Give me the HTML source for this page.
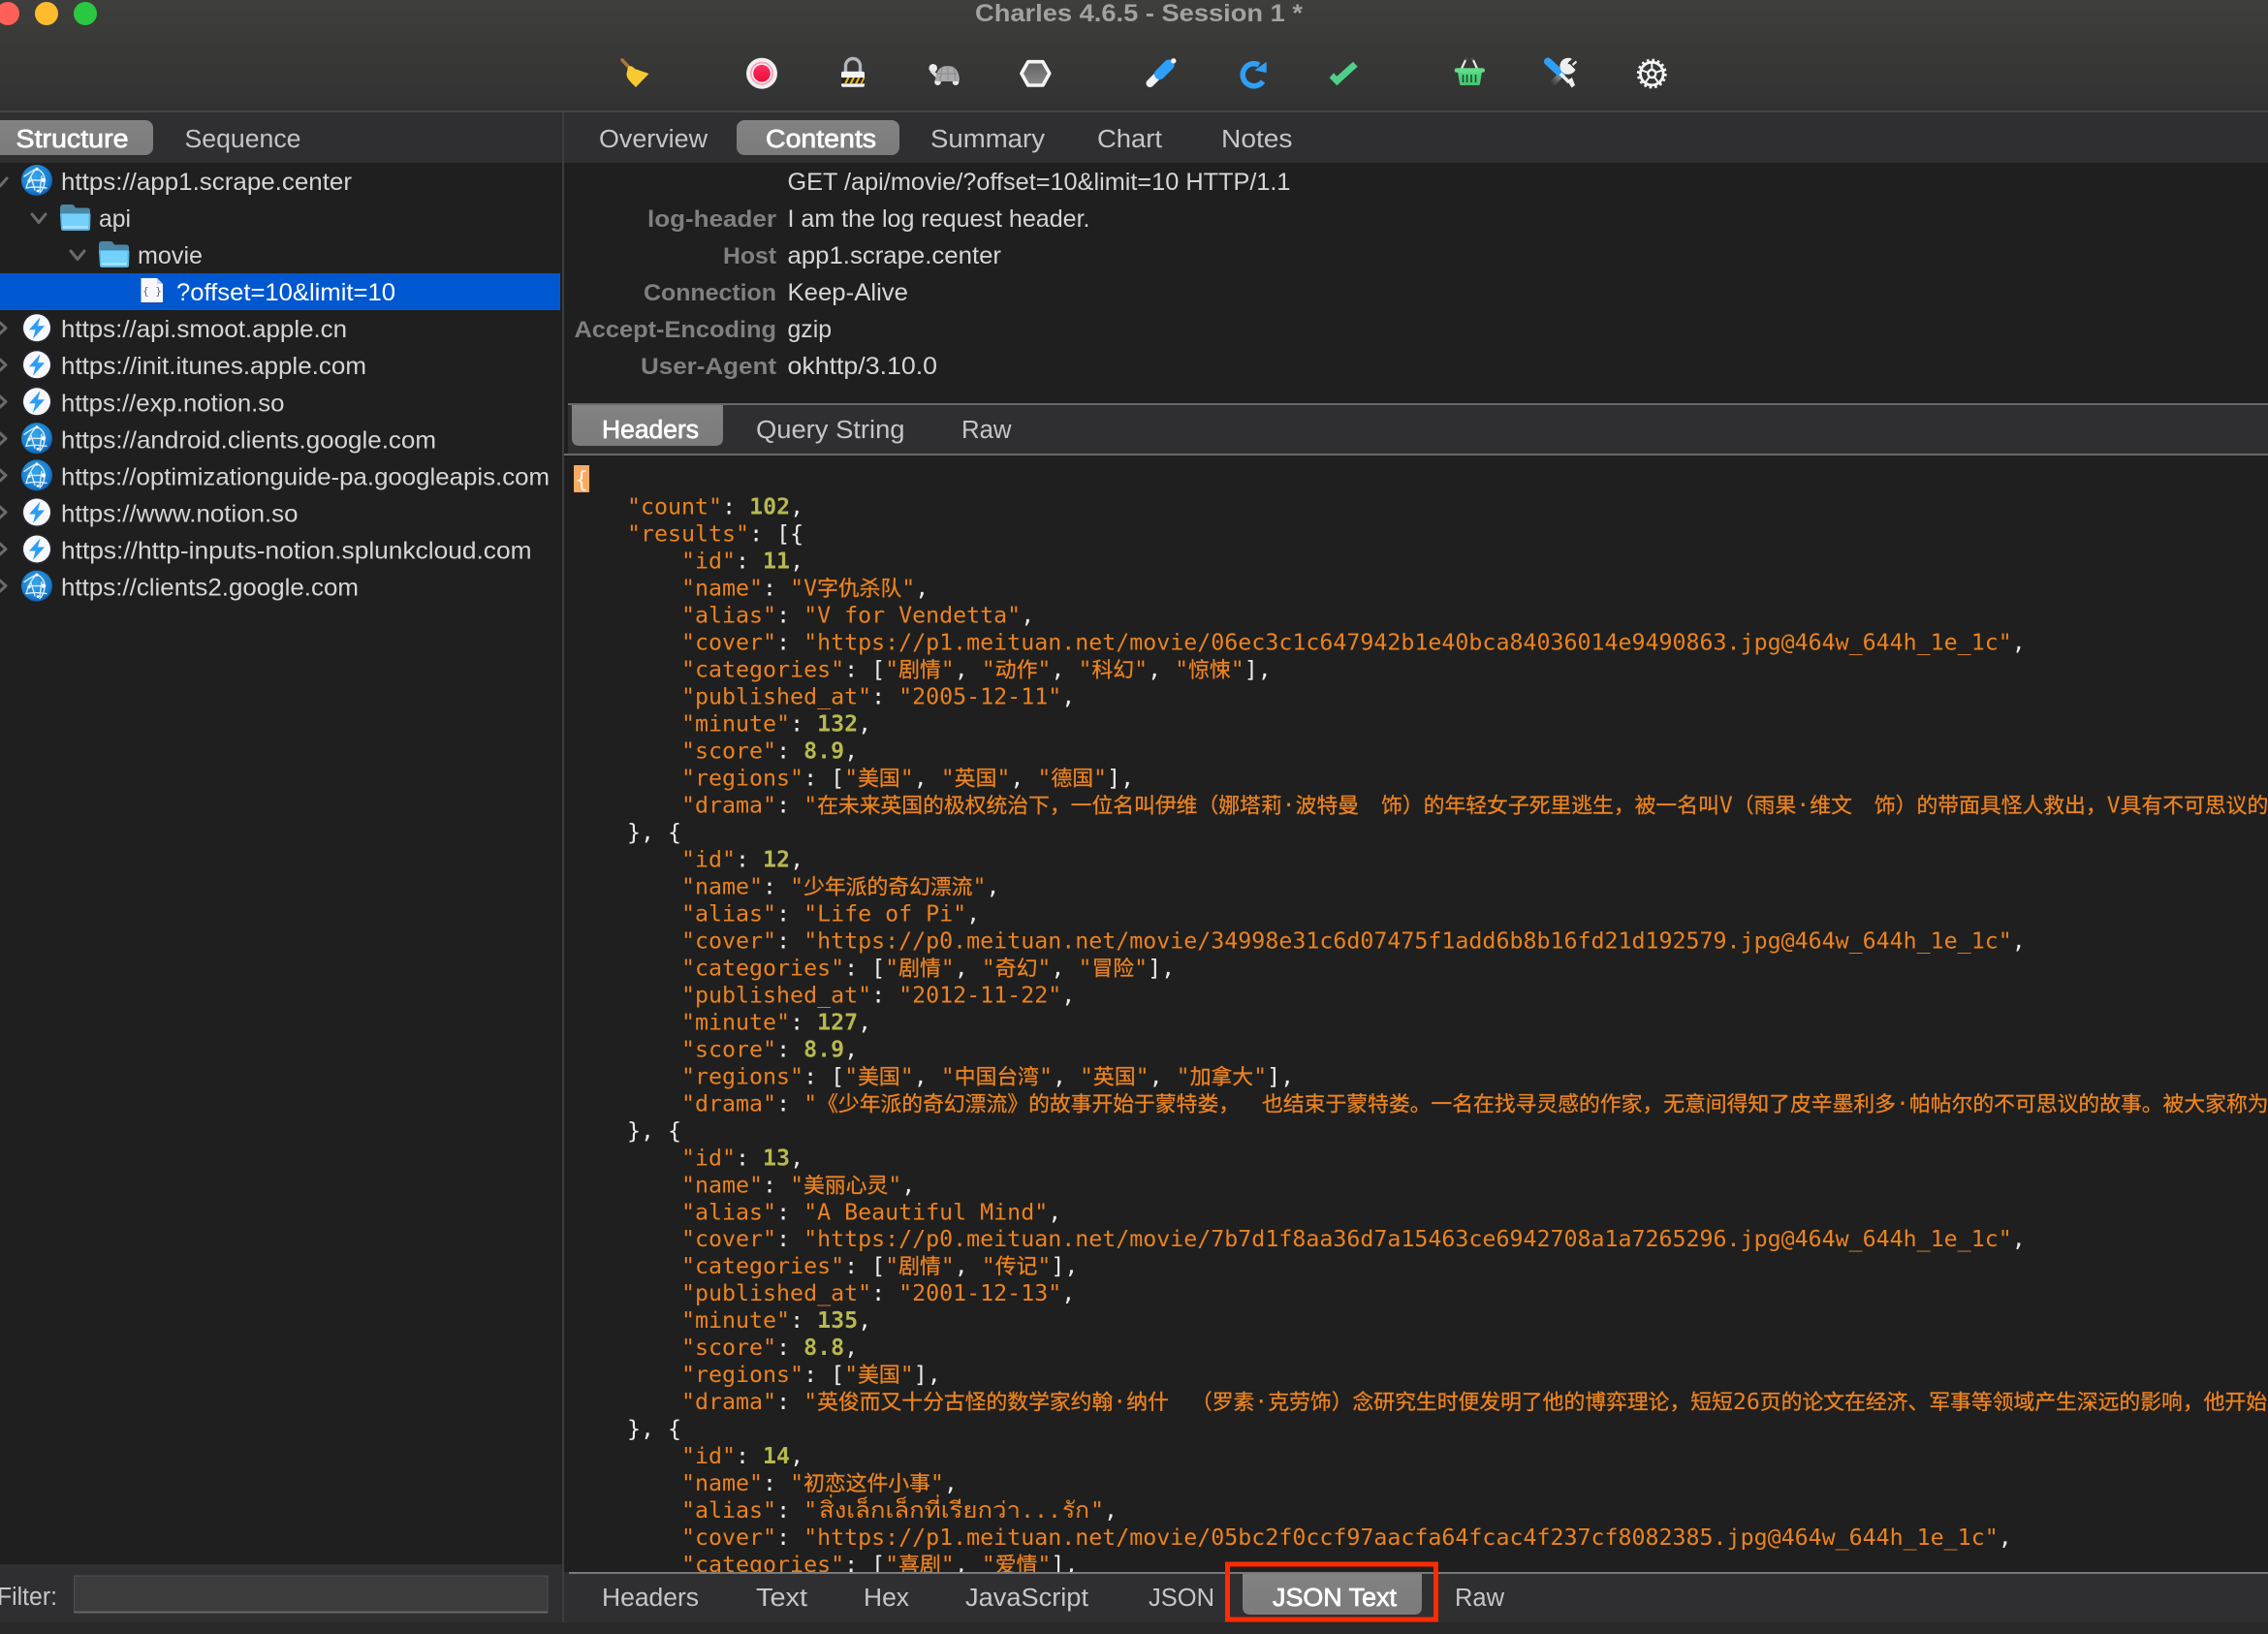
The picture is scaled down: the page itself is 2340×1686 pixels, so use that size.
<!DOCTYPE html>
<html><head><meta charset="utf-8"><title>Charles 4.6.5 - Session 1 *</title>
<style>
html,body{margin:0;padding:0;background:#1f1f1f;width:2340px;height:1686px;overflow:hidden}
svg{display:block;position:absolute;left:0;top:0}
text{white-space:pre}
.u{font-family:"Liberation Sans",sans-serif;font-size:25px;fill:#d6d6d6}
.t{font-family:"Liberation Sans",sans-serif;font-size:25.5px;fill:#c6c6c6}
.s{font-family:"Liberation Sans",sans-serif;font-size:25.5px;fill:#fff;stroke:#fff;stroke-width:.7px}
.l{font-family:"Liberation Sans",sans-serif;font-size:24.5px;fill:#808080;font-weight:bold;text-anchor:start}
.j{font-family:"DejaVu Sans Mono",monospace;font-size:23.27px;fill:#ea8220}
.w{fill:#ececec}
.n{fill:#b7b950;font-weight:bold}
.c{font-family:"Noto Sans CJK SC",sans-serif;font-size:21.8px;stroke:#ea8220;stroke-width:.3px}
.p{font-size:19.1px}
.chev{fill:none;stroke:#6b6b6b;stroke-width:3;stroke-linecap:round;stroke-linejoin:round}
</style></head><body>
<svg width="2340" height="1686" viewBox="0 0 2340 1686" xmlns="http://www.w3.org/2000/svg">
<defs>
<linearGradient id="tb" x1="0" y1="0" x2="0" y2="1"><stop offset="0" stop-color="#3e3e3c"/><stop offset="1" stop-color="#323232"/></linearGradient>
<linearGradient id="sel" x1="0" y1="0" x2="0" y2="1"><stop offset="0" stop-color="#828282"/><stop offset="1" stop-color="#7b7b7b"/></linearGradient>
<radialGradient id="gl" cx=".45" cy=".4" r=".65"><stop offset="0" stop-color="#38a6e8"/><stop offset=".7" stop-color="#1a7fd0"/><stop offset="1" stop-color="#0b55a8"/></radialGradient>
<linearGradient id="hx" x1="0" y1="0" x2="0" y2="1"><stop offset="0" stop-color="#606060"/><stop offset="1" stop-color="#8a8a8a"/></linearGradient>
<linearGradient id="rd" x1="0" y1="0" x2="0" y2="1"><stop offset="0" stop-color="#ff2d5c"/><stop offset="1" stop-color="#e8103a"/></linearGradient>
<linearGradient id="wr" x1="1" y1="0" x2="0" y2="1"><stop offset="0" stop-color="#e8e8e8"/><stop offset=".5" stop-color="#8a8a8a"/><stop offset="1" stop-color="#333"/></linearGradient>
<linearGradient id="bk" x1="0" y1="0" x2="0" y2="1"><stop offset="0" stop-color="#4fd882"/><stop offset="1" stop-color="#48c470"/></linearGradient>
<g id="globe">
<circle cx="16" cy="16" r="16" fill="url(#gl)"/>
<g fill="none" stroke="#d8ecfa" stroke-width="1.400" stroke-linecap="round">
<path d="M5 24 Q9 10 16 4"/><path d="M16 4 Q24 8 24 16 Q24 24 19 29"/><path d="M8 16 H24"/><path d="M5 24 Q14 22 26 24"/><path d="M10 13 L14 26"/><path d="M21 12 L19 27"/><path d="M3 12 Q10 7 16 4"/>
</g>
<circle cx="16" cy="4.500" r="1.600" fill="#fff"/><circle cx="23" cy="16" r="2.200" fill="#fff"/><circle cx="8" cy="17" r="1.600" fill="#fff"/><circle cx="17" cy="27" r="1.400" fill="#fff"/>
</g>
<g id="bolt">
<circle cx="14.500" cy="14.500" r="16" fill="#24242b"/>
<circle cx="14.500" cy="14.500" r="14" fill="#f6f8fb"/>
<path d="M18 3.500 L6.500 16.500 H13 L10.500 26 L22.500 12.500 H15.500 Z" fill="#2b9df5"/>
</g>
<g id="folder">
<path d="M0 5 Q0 1 3 1 H12 Q14 1 15 3 L16 4.500 H28 Q31 4.500 31 7.500 V14 H0 Z" fill="#4b87a4"/>
<path d="M1 10 H30 Q31.500 10 31.500 12 L31 26 Q31 28 28.500 28 H3.500 Q1 28 1 26 L0 12 Q0 10 1 10 Z" fill="#5ab4de"/>
<rect x="2" y="11" width="27.500" height="12" fill="#74d1fb"/>
<rect x="2.500" y="23" width="26.500" height="3" fill="#a0e0fc"/>
</g>
</defs>

<!-- toolbar -->
<rect x="0" y="0" width="2340" height="114" fill="url(#tb)"/>
<rect x="0" y="114" width="2340" height="2" fill="#454545"/>
<circle cx="8" cy="14" r="12" fill="#fe5f57"/>
<circle cx="48" cy="14" r="12" fill="#febb2e"/>
<circle cx="88" cy="14" r="12" fill="#2ac840"/>
<text x="1006" y="22" font-family="Liberation Sans" font-weight="bold" font-size="25" fill="#a2a2a0" textLength="338" lengthAdjust="spacingAndGlyphs">Charles 4.6.5 - Session 1 *</text>

<!-- broom -->
<path d="M642 62 L650 70.500" stroke="#a87838" stroke-width="3.500" stroke-linecap="round"/>
<path d="M648 68.700 Q652 67 655 71 L669.500 76 L656 90 L651 85 Q646 80 646.500 76 Z" fill="#f8c930"/>
<!-- record -->
<circle cx="786" cy="75.700" r="16" fill="#f0eef0"/>
<circle cx="786" cy="75.700" r="12" fill="#f59ab2"/>
<circle cx="786" cy="75.700" r="10.500" fill="#fbe8ee"/>
<circle cx="786" cy="75.700" r="8.800" fill="url(#rd)"/>
<!-- lock -->
<path d="M872.500 75 V68 A7.500 7.500 0 0 1 887.500 68 V75" fill="none" stroke="#b4b4c0" stroke-width="3.400"/>
<rect x="868" y="73.700" width="24" height="16" rx="2" fill="#f4f4f6"/>
<rect x="868" y="80" width="24" height="6.300" fill="#26261f"/>
<path d="M871 86.300 L874 80 H876.500 L873.500 86.300 Z M876.500 86.300 L879.500 80 H882 L879 86.300 Z M882 86.300 L885 80 H887.500 L884.500 86.300 Z M887.500 86.300 L890.500 80 H892 V81 L889.500 86.300 Z" fill="#e5b52a"/>
<!-- turtle -->
<circle cx="962.700" cy="70.300" r="4.300" fill="#ececec"/>
<path d="M961 73 L968 80" stroke="#ddd" stroke-width="3.500"/>
<circle cx="967.500" cy="84.700" r="3.300" fill="#e8e8e8"/>
<circle cx="986" cy="84.700" r="3.300" fill="#e8e8e8"/>
<path d="M965 82.500 Q966 68 978 68 Q989 68 990 82.500 Q990 84 986 84 H969 Q965 84 965 82.500 Z" fill="#a9a9ab"/>
<path d="M972 69.500 L970 83 M978 68 V83 M984 69.500 L986 83 M967 76 H988" stroke="#8a8a8c" stroke-width="1" fill="none"/>
<!-- hexagon -->
<path d="M1060.700 63.700 H1076 L1082.800 75.800 L1076 88 H1060.700 L1053.900 75.800 Z" fill="url(#hx)" stroke="#f4f4f4" stroke-width="3.600" stroke-linejoin="round"/>
<!-- pen -->
<path d="M1186.500 86 L1196 76.500" stroke="#f2f2f2" stroke-width="8" stroke-linecap="round"/>
<path d="M1196.500 76.500 L1206 67" stroke="#2f9ff8" stroke-width="11" stroke-linecap="round"/>
<circle cx="1210.800" cy="62.800" r="2.700" fill="#f2f2f2"/>
<!-- refresh -->
<path d="M1303 84 A11.500 11.500 0 1 1 1299 67" fill="none" stroke="#2f9ff5" stroke-width="5.500"/>
<path d="M1306.700 63.700 V75 L1294.500 72.500 Z" fill="#2f9ff5"/>
<!-- check -->
<path d="M1371.700 80.300 L1379.300 88.200 L1400.700 68.700 L1396 63.700 L1379.300 78.700 L1376 75.300 Z" fill="#4ed088"/>
<!-- basket -->
<path d="M1507 73 L1512 62" stroke="#e8e8e8" stroke-width="2.200"/><path d="M1525 73 L1520 62" stroke="#e8e8e8" stroke-width="2.200"/>
<path d="M1512 62 L1514 60 M1520 62 L1518 60" stroke="#555" stroke-width="2.500"/>
<path d="M1504 74 H1529 L1527 86.500 Q1527 88 1525 88 H1508 Q1506 88 1506 86.500 Z" fill="url(#bk)"/>
<rect x="1500.700" y="70.300" width="31.300" height="4.500" rx="2.200" fill="#62dc8a"/>
<path d="M1509.500 77 V85 M1513.600 77 V85 M1518 77 V85 M1522.500 77 V85" stroke="#22482f" stroke-width="1.600"/>
<!-- tools -->
<path d="M1618.500 69 L1601 87" stroke="url(#wr)" stroke-width="6" stroke-linecap="round"/>
<path d="M1597 63.500 L1610.500 76" stroke="#2f9ff5" stroke-width="8" stroke-linecap="round"/>
<path d="M1610 76 L1619 85" stroke="#eeeeee" stroke-width="3.500"/>
<path d="M1617 83 L1622 80 L1625 88 L1621.500 90.500 Z" fill="#eee"/>
<path d="M1622 60.800 A8.500 8.500 0 1 0 1625.500 72 L1621 67.500 L1618.500 68 L1617.500 66 L1618 64.500 Z M1626 62.500 L1622 66 L1623 68 L1627 64.500 Z" fill="#eeeeee"/>
<!-- gear -->
<g fill="none" stroke="#f4f6f8">
<circle cx="1704.300" cy="76" r="11.800" stroke-width="2.800"/>
<circle cx="1704.300" cy="76" r="14" stroke-width="2.800" stroke-dasharray="2.600 2.900"/>
<circle cx="1704.300" cy="76" r="4" stroke-width="2.400"/>
<path d="M1704.300 72 V65 M1708.100 74.800 L1714.800 72.600 M1706.700 79.200 L1710.900 85 M1701.900 79.200 L1697.700 85 M1700.500 74.800 L1693.800 72.600" stroke-width="2"/>
</g>

<!-- tab bar -->
<rect x="0" y="116" width="2340" height="52" fill="#2f2f31"/>
<rect x="-10" y="124" width="168" height="36" rx="8" fill="url(#sel)"/>
<text class="s" x="16.500" y="152" textLength="116" lengthAdjust="spacingAndGlyphs">Structure</text>
<text class="t" x="190.500" y="152" textLength="120" lengthAdjust="spacingAndGlyphs">Sequence</text>
<text class="t" x="618" y="152" textLength="112" lengthAdjust="spacingAndGlyphs">Overview</text>
<rect x="760" y="124" width="168" height="36" rx="8" fill="url(#sel)"/>
<text class="s" x="790" y="152" textLength="114" lengthAdjust="spacingAndGlyphs">Contents</text>
<text class="t" x="960" y="152" textLength="118" lengthAdjust="spacingAndGlyphs">Summary</text>
<text class="t" x="1132" y="152" textLength="67" lengthAdjust="spacingAndGlyphs">Chart</text>
<text class="t" x="1260" y="152" textLength="73.500" lengthAdjust="spacingAndGlyphs">Notes</text>

<!-- tree -->
<rect x="0" y="282" width="578" height="38" fill="#0058d1"/>
<polyline class="chev" points="-7,184 0,192 7,184"/>
<use href="#globe" x="22" y="170"/>
<text class="u" x="63" y="196" textLength="300" lengthAdjust="spacingAndGlyphs">https://app1.scrape.center</text>
<polyline class="chev" points="33,221 40,229.500 47,221"/>
<use href="#folder" x="62" y="210"/>
<text class="u" x="102" y="234" textLength="33" lengthAdjust="spacingAndGlyphs">api</text>
<polyline class="chev" points="73,259 80,267.500 87,259"/>
<use href="#folder" x="102" y="248"/>
<text class="u" x="142" y="272" textLength="67" lengthAdjust="spacingAndGlyphs">movie</text>
<path d="M145.500 287 H162 L168 293 V312.500 H145.500 Z" fill="#f6f8fc"/>
<path d="M162 287 V293 H168 Z" fill="#d0d4dc"/>
<rect x="145.500" y="312" width="23" height="2" fill="#1c4fa8"/>
<text x="157" y="304" font-family="DejaVu Sans Mono" font-size="11" fill="#667" text-anchor="middle">{ }</text>
<text class="u" x="182" y="310" style="fill:#fff" textLength="226" lengthAdjust="spacingAndGlyphs">?offset=10&amp;limit=10</text>

<polyline class="chev" points="0,333 6,338.500 0,344"/>
<use href="#bolt" x="23.500" y="323.700"/>
<text class="u" x="63" y="348.200" textLength="295" lengthAdjust="spacingAndGlyphs">https://api.smoot.apple.cn</text>
<polyline class="chev" points="0,371 6,376.500 0,382"/>
<use href="#bolt" x="23.500" y="361.800"/>
<text class="u" x="63" y="386.200" textLength="315" lengthAdjust="spacingAndGlyphs">https://init.itunes.apple.com</text>
<polyline class="chev" points="0,409 6,414.500 0,420"/>
<use href="#bolt" x="23.500" y="399.800"/>
<text class="u" x="63" y="424.300" textLength="230.500" lengthAdjust="spacingAndGlyphs">https://exp.notion.so</text>
<polyline class="chev" points="0,447 6,452.500 0,458"/>
<use href="#globe" x="22" y="436.300"/>
<text class="u" x="63" y="462.300" textLength="387" lengthAdjust="spacingAndGlyphs">https://android.clients.google.com</text>
<polyline class="chev" points="0,485 6,490.500 0,496"/>
<use href="#globe" x="22" y="474.400"/>
<text class="u" x="63" y="500.400" textLength="504" lengthAdjust="spacingAndGlyphs">https://optimizationguide-pa.googleapis.com</text>
<polyline class="chev" points="0,523 6,528.500 0,534"/>
<use href="#bolt" x="23.500" y="514"/>
<text class="u" x="63" y="538.400" textLength="244.500" lengthAdjust="spacingAndGlyphs">https://www.notion.so</text>
<polyline class="chev" points="0,561 6,566.500 0,572"/>
<use href="#bolt" x="23.500" y="552"/>
<text class="u" x="63" y="576.500" textLength="485.500" lengthAdjust="spacingAndGlyphs">https://http-inputs-notion.splunkcloud.com</text>
<polyline class="chev" points="0,599 6,604.500 0,610"/>
<use href="#globe" x="22" y="588.600"/>
<text class="u" x="63" y="614.600" textLength="307" lengthAdjust="spacingAndGlyphs">https://clients2.google.com</text>

<!-- request headers -->
<text class="u" x="812.500" y="196" textLength="519" lengthAdjust="spacingAndGlyphs">GET /api/movie/?offset=10&amp;limit=10 HTTP/1.1</text>
<text class="l" x="668" y="234" textLength="133" lengthAdjust="spacingAndGlyphs">log-header</text>
<text class="u" x="812.500" y="234" textLength="312" lengthAdjust="spacingAndGlyphs">I am the log request header.</text>
<text class="l" x="746" y="272" textLength="55" lengthAdjust="spacingAndGlyphs">Host</text>
<text class="u" x="812.500" y="272" textLength="220.500" lengthAdjust="spacingAndGlyphs">app1.scrape.center</text>
<text class="l" x="664" y="310" textLength="137" lengthAdjust="spacingAndGlyphs">Connection</text>
<text class="u" x="812.500" y="310" textLength="124.500" lengthAdjust="spacingAndGlyphs">Keep-Alive</text>
<text class="l" x="592.500" y="348" textLength="208.500" lengthAdjust="spacingAndGlyphs">Accept-Encoding</text>
<text class="u" x="812.500" y="348" textLength="45.500" lengthAdjust="spacingAndGlyphs">gzip</text>
<text class="l" x="661" y="386" textLength="140" lengthAdjust="spacingAndGlyphs">User-Agent</text>
<text class="u" x="812.500" y="386" textLength="154.500" lengthAdjust="spacingAndGlyphs">okhttp/3.10.0</text>

<!-- sub tabs -->
<rect x="586" y="416" width="1754" height="2" fill="#686868"/>
<rect x="586" y="418" width="1754" height="50" fill="#2f2f31"/>
<rect x="582" y="468" width="1758" height="2" fill="#686868"/>
<path d="M590 418 H746 V452 Q746 460 738 460 H598 Q590 460 590 452 Z" fill="url(#sel)"/>
<text class="s" x="621" y="452" textLength="100" lengthAdjust="spacingAndGlyphs">Headers</text>
<text class="t" x="780" y="452" textLength="153.500" lengthAdjust="spacingAndGlyphs">Query String</text>
<text class="t" x="992" y="452" textLength="51.500" lengthAdjust="spacingAndGlyphs">Raw</text>

<!-- JSON -->
<rect x="592" y="480" width="16" height="28" fill="#f8aa62"/>
<text class="j" x="593" y="502.500" style="fill:#fdf3e6">{</text>
<text class="j" x="647" y="530.500">"count"<tspan class="w">: </tspan><tspan class="n">102</tspan><tspan class="w">,</tspan></text>
<text class="j" x="647" y="558.500">"results"<tspan class="w">: [{</tspan></text>
<text class="j" x="703" y="586.500">"id"<tspan class="w">: </tspan><tspan class="n">11</tspan><tspan class="w">,</tspan></text>
<text class="j" x="703" y="614.500">"name"<tspan class="w">: </tspan>"V<tspan class="c">字仇杀队</tspan>"<tspan class="w">,</tspan></text>
<text class="j" x="703" y="642.500">"alias"<tspan class="w">: </tspan>"V for Vendetta"<tspan class="w">,</tspan></text>
<text class="j" x="703" y="670.450">"cover"<tspan class="w">: </tspan>"https://p1.meituan.net/movie/06ec3c1c647942b1e40bca84036014e9490863.jpg@464w_644h_1e_1c"<tspan class="w">,</tspan></text>
<text class="j" x="703" y="698.450">"categories"<tspan class="w">: [</tspan>"<tspan class="c">剧情</tspan>"<tspan class="w">, </tspan>"<tspan class="c">动作</tspan>"<tspan class="w">, </tspan>"<tspan class="c">科幻</tspan>"<tspan class="w">, </tspan>"<tspan class="c">惊悚</tspan>"<tspan class="w">],</tspan></text>
<text class="j" x="703" y="726.400">"published_at"<tspan class="w">: </tspan>"2005-12-11"<tspan class="w">,</tspan></text>
<text class="j" x="703" y="754.400">"minute"<tspan class="w">: </tspan><tspan class="n">132</tspan><tspan class="w">,</tspan></text>
<text class="j" x="703" y="782.400">"score"<tspan class="w">: </tspan><tspan class="n">8.9</tspan><tspan class="w">,</tspan></text>
<text class="j" x="703" y="810.400">"regions"<tspan class="w">: [</tspan>"<tspan class="c">美国</tspan>"<tspan class="w">, </tspan>"<tspan class="c">英国</tspan>"<tspan class="w">, </tspan>"<tspan class="c">德国</tspan>"<tspan class="w">],</tspan></text>
<text class="j" x="703" y="838.400">"drama"<tspan class="w">: </tspan>"<tspan class="c">在未来英国的极权统治下，一位名叫伊维（娜塔莉</tspan>·<tspan class="c">波特曼</tspan><tspan class="p">  </tspan><tspan class="c">饰）的年轻女子死里逃生，被一名叫</tspan>V<tspan class="c">（雨果</tspan>·<tspan class="c">维文</tspan><tspan class="p">  </tspan><tspan class="c">饰）的带面具怪人救出，</tspan>V<tspan class="c">具有不可思议的能力</tspan></text>
<text class="j w" x="647" y="866.350">}, {</text>

<text class="j" x="703" y="894.350">"id"<tspan class="w">: </tspan><tspan class="n">12</tspan><tspan class="w">,</tspan></text>
<text class="j" x="703" y="922.350">"name"<tspan class="w">: </tspan>"<tspan class="c">少年派的奇幻漂流</tspan>"<tspan class="w">,</tspan></text>
<text class="j" x="703" y="950.350">"alias"<tspan class="w">: </tspan>"Life of Pi"<tspan class="w">,</tspan></text>
<text class="j" x="703" y="978.350">"cover"<tspan class="w">: </tspan>"https://p0.meituan.net/movie/34998e31c6d07475f1add6b8b16fd21d192579.jpg@464w_644h_1e_1c"<tspan class="w">,</tspan></text>
<text class="j" x="703" y="1006.300">"categories"<tspan class="w">: [</tspan>"<tspan class="c">剧情</tspan>"<tspan class="w">, </tspan>"<tspan class="c">奇幻</tspan>"<tspan class="w">, </tspan>"<tspan class="c">冒险</tspan>"<tspan class="w">],</tspan></text>
<text class="j" x="703" y="1034.300">"published_at"<tspan class="w">: </tspan>"2012-11-22"<tspan class="w">,</tspan></text>
<text class="j" x="703" y="1062.300">"minute"<tspan class="w">: </tspan><tspan class="n">127</tspan><tspan class="w">,</tspan></text>
<text class="j" x="703" y="1090.300">"score"<tspan class="w">: </tspan><tspan class="n">8.9</tspan><tspan class="w">,</tspan></text>
<text class="j" x="703" y="1118.300">"regions"<tspan class="w">: [</tspan>"<tspan class="c">美国</tspan>"<tspan class="w">, </tspan>"<tspan class="c">中国台湾</tspan>"<tspan class="w">, </tspan>"<tspan class="c">英国</tspan>"<tspan class="w">, </tspan>"<tspan class="c">加拿大</tspan>"<tspan class="w">],</tspan></text>
<text class="j" x="703" y="1146.300">"drama"<tspan class="w">: </tspan>"<tspan class="c">《少年派的奇幻漂流》的故事开始于蒙特娄，</tspan><tspan class="p">  </tspan><tspan class="c">也结束于蒙特娄。一名在找寻灵感的作家，无意间得知了皮辛墨利多</tspan>·<tspan class="c">帕帖尔的不可思议的故事。被大家称为派</tspan></text>
<text class="j w" x="647" y="1174.250">}, {</text>

<text class="j" x="703" y="1202.250">"id"<tspan class="w">: </tspan><tspan class="n">13</tspan><tspan class="w">,</tspan></text>
<text class="j" x="703" y="1230.250">"name"<tspan class="w">: </tspan>"<tspan class="c">美丽心灵</tspan>"<tspan class="w">,</tspan></text>
<text class="j" x="703" y="1258.250">"alias"<tspan class="w">: </tspan>"A Beautiful Mind"<tspan class="w">,</tspan></text>
<text class="j" x="703" y="1286.200">"cover"<tspan class="w">: </tspan>"https://p0.meituan.net/movie/7b7d1f8aa36d7a15463ce6942708a1a7265296.jpg@464w_644h_1e_1c"<tspan class="w">,</tspan></text>
<text class="j" x="703" y="1314.200">"categories"<tspan class="w">: [</tspan>"<tspan class="c">剧情</tspan>"<tspan class="w">, </tspan>"<tspan class="c">传记</tspan>"<tspan class="w">],</tspan></text>
<text class="j" x="703" y="1342.200">"published_at"<tspan class="w">: </tspan>"2001-12-13"<tspan class="w">,</tspan></text>
<text class="j" x="703" y="1370.200">"minute"<tspan class="w">: </tspan><tspan class="n">135</tspan><tspan class="w">,</tspan></text>
<text class="j" x="703" y="1398.200">"score"<tspan class="w">: </tspan><tspan class="n">8.8</tspan><tspan class="w">,</tspan></text>
<text class="j" x="703" y="1426.200">"regions"<tspan class="w">: [</tspan>"<tspan class="c">美国</tspan>"<tspan class="w">],</tspan></text>
<text class="j" x="703" y="1454.150">"drama"<tspan class="w">: </tspan>"<tspan class="c">英俊而又十分古怪的数学家约翰</tspan>·<tspan class="c">纳什</tspan><tspan class="p">  </tspan><tspan class="c">（罗素</tspan>·<tspan class="c">克劳饰）念研究生时便发明了他的博弈理论，短短</tspan>26<tspan class="c">页的论文在经济、军事等领域产生深远的影响，他开始</tspan></text>
<text class="j w" x="647" y="1482.150">}, {</text>

<text class="j" x="703" y="1510.150">"id"<tspan class="w">: </tspan><tspan class="n">14</tspan><tspan class="w">,</tspan></text>
<text class="j" x="703" y="1538.150">"name"<tspan class="w">: </tspan>"<tspan class="c">初恋这件小事</tspan>"<tspan class="w">,</tspan></text>
<text class="j" x="703" y="1566.100">"alias"<tspan class="w">: </tspan>"</text>
<text class="j" x="845" y="1566.100" textLength="208" lengthAdjust="spacingAndGlyphs">สิ่งเล็กเล็กที่เรียกว่า</text>
<text class="j" x="1053" y="1566.100">...</text>
<text class="j" x="1096" y="1566.100" textLength="28" lengthAdjust="spacingAndGlyphs">รัก</text>
<text class="j" x="1125" y="1566.100">"<tspan class="w">,</tspan></text>
<text class="j" x="703" y="1594.100">"cover"<tspan class="w">: </tspan>"https://p1.meituan.net/movie/05bc2f0ccf97aacfa64fcac4f237cf8082385.jpg@464w_644h_1e_1c"<tspan class="w">,</tspan></text>
<text class="j" x="703" y="1622.100">"categories"<tspan class="w">: [</tspan>"<tspan class="c">喜剧</tspan>"<tspan class="w">, </tspan>"<tspan class="c">爱情</tspan>"<tspan class="w">],</tspan></text>

<!-- bottom bars -->
<rect x="0" y="1614" width="580" height="60" fill="#2f2f31"/>
<rect x="582" y="1622" width="1758" height="52" fill="#2f2f31"/>
<rect x="587" y="1622" width="1753" height="2" fill="#7a7a7a"/>
<rect x="0" y="1674" width="2340" height="12" fill="#282828"/>
<rect x="580" y="116" width="2" height="1558" fill="#3d3d3d"/>
<rect x="76.500" y="1626" width="488.500" height="38" fill="#3c3c3c" stroke="#4f4f4f" stroke-width="1"/>
<rect x="76.500" y="1662.500" width="488.500" height="2" fill="#666"/>
<text class="t" x="-3" y="1656" textLength="62" lengthAdjust="spacingAndGlyphs">Filter:</text>
<text class="t" x="621" y="1657" textLength="100" lengthAdjust="spacingAndGlyphs">Headers</text>
<text class="t" x="780" y="1657" textLength="53" lengthAdjust="spacingAndGlyphs">Text</text>
<text class="t" x="891" y="1657" textLength="47" lengthAdjust="spacingAndGlyphs">Hex</text>
<text class="t" x="996" y="1657" textLength="127" lengthAdjust="spacingAndGlyphs">JavaScript</text>
<text class="t" x="1185" y="1657" textLength="68" lengthAdjust="spacingAndGlyphs">JSON</text>
<path d="M1282 1624 H1467 V1658 Q1467 1666 1459 1666 H1290 Q1282 1666 1282 1658 Z" fill="url(#sel)"/>
<text class="s" x="1313" y="1657" textLength="128" lengthAdjust="spacingAndGlyphs">JSON Text</text>
<text class="t" x="1501" y="1657" textLength="51" lengthAdjust="spacingAndGlyphs">Raw</text>
<rect x="1266.500" y="1614" width="215" height="57" fill="none" stroke="#ff2a00" stroke-width="5"/>
</svg>
</body></html>
